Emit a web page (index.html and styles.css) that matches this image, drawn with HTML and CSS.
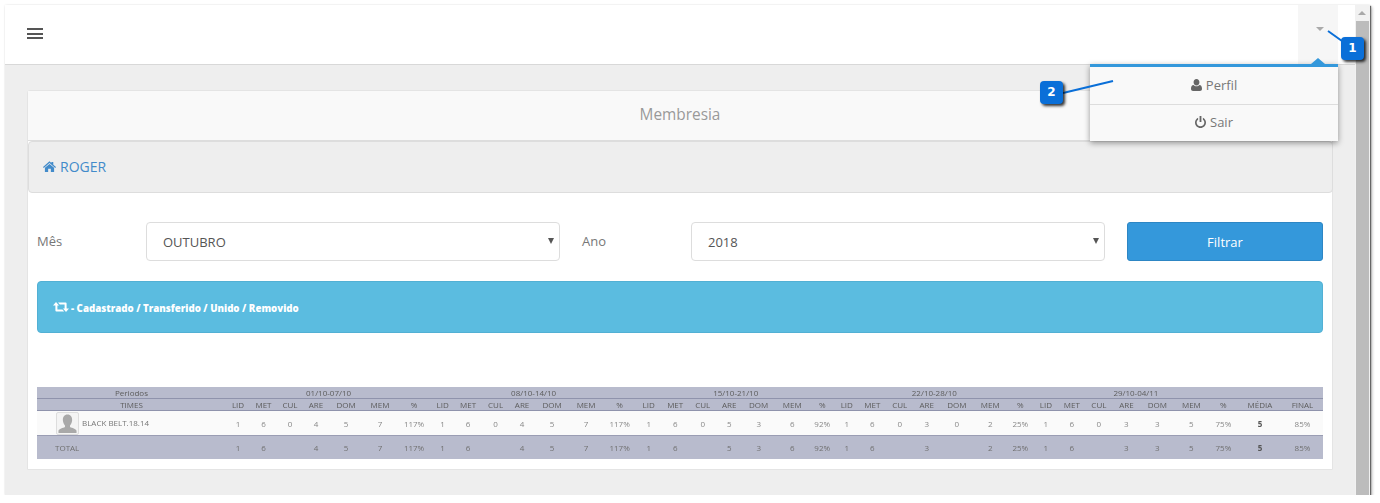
FILE: index.html
```html
<!DOCTYPE html>
<html lang="pt">
<head>
    <meta charset="UTF-8">
    <meta name="viewport" content="width=device-width, initial-scale=1.0">
    <title>Membresia</title>
    <link rel="stylesheet" href="styles.css">
</head>
<body>
<div class="window">
    <div class="main">
        <header class="topbar">
            <div class="menu-icon"><span></span><span></span><span></span></div>
            <div class="user-toggle"><span class="caret"></span></div>
        </header>

        <div class="content">
            <div class="card">
                <div class="card-title">Membresia</div>
                <div class="breadcrumb">
                    <svg class="icon-home" viewBox="0 0 24 20"><path d="M12 0.5 L15.5 3.6 V1.5 H19 V6.7 L24 11 L22.6 12.6 L12 3.4 L1.4 12.6 L0 11 Z M12 5.2 L20.5 12.5 V20 H14.5 V14 H9.5 V20 H3.5 V12.5 Z"/></svg>
                    <a class="crumb-link">ROGER</a>
                </div>
                <div class="card-body">
                    <form class="filter-row">
                        <label class="filter-label">Mês</label>
                        <div class="select-wrap month">
                            <select><option>OUTUBRO</option></select>
                        </div>
                        <label class="filter-label year-label">Ano</label>
                        <div class="select-wrap year">
                            <select><option>2018</option></select>
                        </div>
                        <button type="button" class="btn-filter">Filtrar</button>
                    </form>

                    <div class="alert">
                        <svg class="icon-retweet" viewBox="0 0 16 10"><path d="M3 0 L6 3.4 H4.4 V7.6 H9.4 L11.2 9.6 H3.4 Q2.4 9.6 2.4 8.6 V3.4 H0 Z M5 0.4 H12.6 Q13.6 0.4 13.6 1.4 V6.6 H16 L13 10 L10 6.6 H11.6 V2.4 H6.8 Z"/></svg>
                        <span>- Cadastrado / Transferido / Unido / Removido</span>
                    </div>

                    <table class="report">
                        <colgroup>
                            <col width="189">
                            <col width="24"><col width="27"><col width="26"><col width="26"><col width="34"><col width="34"><col width="34">
                            <col width="23"><col width="28"><col width="27"><col width="26"><col width="34"><col width="34"><col width="33">
                            <col width="25"><col width="28"><col width="27"><col width="26"><col width="33"><col width="34"><col width="26">
                            <col width="23"><col width="28"><col width="27"><col width="27"><col width="33"><col width="34"><col width="26">
                            <col width="25"><col width="27"><col width="27"><col width="28"><col width="34"><col width="34"><col width="30">
                            <col width="43"><col width="42">
                        </colgroup>
                        <thead>
                            <tr class="period-row">
                                <th>Periodos</th>
                                <th colspan="7">01/10-07/10</th>
                                <th colspan="7">08/10-14/10</th>
                                <th colspan="7">15/10-21/10</th>
                                <th colspan="7">22/10-28/10</th>
                                <th colspan="7">29/10-04/11</th>
                                <th colspan="2"></th>
                            </tr>
                            <tr class="column-row">
                                <th>TIMES</th>
                                <th>LID</th><th>MET</th><th>CUL</th><th>ARE</th><th>DOM</th><th>MEM</th><th>%</th>
                                <th>LID</th><th>MET</th><th>CUL</th><th>ARE</th><th>DOM</th><th>MEM</th><th>%</th>
                                <th>LID</th><th>MET</th><th>CUL</th><th>ARE</th><th>DOM</th><th>MEM</th><th>%</th>
                                <th>LID</th><th>MET</th><th>CUL</th><th>ARE</th><th>DOM</th><th>MEM</th><th>%</th>
                                <th>LID</th><th>MET</th><th>CUL</th><th>ARE</th><th>DOM</th><th>MEM</th><th>%</th>
                                <th>MÉDIA</th><th>FINAL</th>
                            </tr>
                        </thead>
                        <tbody>
                            <tr class="team-row">
                                <td class="team-cell">
                                    <div class="team">
                                        <div class="avatar">
                                            <svg viewBox="0 0 20 20"><path d="M10 1.5 C13 1.5 14.6 3.8 14.4 7 C14.3 9.2 13.4 10.8 12.4 11.8 V13.4 C14.4 14.4 18 15 18.6 17 V19 H1.4 V17 C2 15 5.6 14.4 7.6 13.4 V11.8 C6.6 10.8 5.7 9.2 5.6 7 C5.4 3.8 7 1.5 10 1.5 Z"/></svg>
                                        </div>
                                        <span class="team-name">BLACK BELT.18.14</span>
                                    </div>
                                </td>
                                <td>1</td><td>6</td><td>0</td><td>4</td><td>5</td><td>7</td><td>117%</td>
                                <td>1</td><td>6</td><td>0</td><td>4</td><td>5</td><td>7</td><td>117%</td>
                                <td>1</td><td>6</td><td>0</td><td>5</td><td>3</td><td>6</td><td>92%</td>
                                <td>1</td><td>6</td><td>0</td><td>3</td><td>0</td><td>2</td><td>25%</td>
                                <td>1</td><td>6</td><td>0</td><td>3</td><td>3</td><td>5</td><td>75%</td>
                                <td><b>5</b></td><td>85%</td>
                            </tr>
                            <tr class="total-row">
                                <td class="total-label">TOTAL</td>
                                <td>1</td><td>6</td><td></td><td>4</td><td>5</td><td>7</td><td>117%</td>
                                <td>1</td><td>6</td><td></td><td>4</td><td>5</td><td>7</td><td>117%</td>
                                <td>1</td><td>6</td><td></td><td>5</td><td>3</td><td>6</td><td>92%</td>
                                <td>1</td><td>6</td><td></td><td>3</td><td></td><td>2</td><td>25%</td>
                                <td>1</td><td>6</td><td></td><td>3</td><td>3</td><td>5</td><td>75%</td>
                                <td><b>5</b></td><td>85%</td>
                            </tr>
                        </tbody>
                    </table>
                </div>
            </div>
        </div>
    </div>

    <div class="scrollbar">
        <div class="scroll-arrow"></div>
        <div class="scroll-thumb"></div>
    </div>

    <div class="user-menu">
        <span class="menu-arrow"></span>
        <a class="menu-item">
            <svg class="menu-icon-svg" viewBox="0 0 12 13"><path d="M6 0 C8 0 9.2 1.5 9.2 3.5 C9.2 5.5 8 7 6 7 C4 7 2.8 5.5 2.8 3.5 C2.8 1.5 4 0 6 0 Z M2.8 6.4 C3.6 7.3 4.7 7.9 6 7.9 C7.3 7.9 8.4 7.3 9.2 6.4 C11 6.6 12 8 12 10.6 C12 12.2 11 13 9.8 13 H2.2 C1 13 0 12.2 0 10.6 C0 8 1 6.6 2.8 6.4 Z"/></svg>
            Perfil
        </a>
        <a class="menu-item">
            <svg class="menu-icon-svg" viewBox="0 0 12 13"><path d="M5 0 H7 V6.5 H5 Z M3.4 1.8 V4 C2.3 4.8 1.8 5.8 1.8 7 C1.8 9.3 3.7 11.1 6 11.1 C8.3 11.1 10.2 9.3 10.2 7 C10.2 5.8 9.7 4.8 8.6 4 V1.8 C10.6 2.7 12 4.7 12 7 C12 10.3 9.3 13 6 13 C2.7 13 0 10.3 0 7 C0 4.7 1.4 2.7 3.4 1.8 Z"/></svg>
            Sair
        </a>
    </div>

    <svg class="callout-line line-one" viewBox="0 0 16 12"><path d="M1 1 L15 11"/></svg>
    <div class="callout badge-one">1</div>
    <svg class="callout-line line-two" viewBox="0 0 52 14"><path d="M1 13 L51 1"/></svg>
    <div class="callout badge-two">2</div>
</div>
</body>
</html>
```

FILE: styles.css
```css
body {
    margin: 0;
    background: #fff;
    font-family: "Open Sans", Arial, sans-serif;
    color: #777;
}

.window {
    position: relative;
    display: flex;
    width: 1365px;
    height: 490px;
    margin: 5px 0 0 5px;
    overflow: hidden;
    background: #eee;
    box-shadow: 1px 1px 1px #666, 2px 2px 3px rgba(0, 0, 0, 0.3), 0 0 2px rgba(0, 0, 0, 0.1);
}

.main {
    flex: 1;
    display: flex;
    flex-direction: column;
    min-width: 0;
}

.topbar {
    display: flex;
    justify-content: space-between;
    height: 59px;
    background: #fff;
    border-bottom: 1px solid #d8d8d8;
    flex-shrink: 0;
}

.menu-icon {
    display: flex;
    flex-direction: column;
    gap: 2.5px;
    margin: 23px 0 0 22px;
}

.menu-icon span {
    display: block;
    width: 16px;
    height: 2px;
    background: #555;
}

.user-toggle {
    width: 40px;
    margin-right: 17px;
    background: #f6f6f6;
    position: relative;
}

.caret {
    display: block;
    width: 0;
    height: 0;
    margin: 22px 0 0 18px;
    border-left: 4px solid transparent;
    border-right: 4px solid transparent;
    border-top: 4px solid #aaa;
}

.content {
    flex: 1;
    padding: 25px 22px 0 22px;
}

.card {
    height: 380px;
    background: #fff;
    border: 1px solid #e4e4e4;
    border-radius: 3px 3px 0 0;
    box-sizing: border-box;
}

.card-title {
    height: 49px;
    line-height: 47px;
    text-align: center;
    font-size: 15.4px;
    color: #999;
    background: #f9f9f9;
    border-bottom: 1px solid #ddd;
}

.breadcrumb {
    display: flex;
    align-items: center;
    gap: 4px;
    height: 52px;
    box-sizing: border-box;
    padding: 0 0 2px 14px;
    background: #eee;
    border: 1px solid #ddd;
    border-radius: 4px;
    margin-right: -1px;
    margin-left: 0;
}

.icon-home {
    width: 13px;
    height: 11px;
    fill: #428bca;
}

.crumb-link {
    font-size: 14px;
    color: #428bca;
}

.card-body {
    padding: 29px 9px 0 9px;
}

.filter-row {
    display: flex;
    align-items: center;
    height: 39px;
}

.filter-label {
    width: 109px;
    flex-shrink: 0;
    font-size: 13px;
    color: #777;
    margin-top: -2px;
}

.year-label {
    margin-left: 22px;
}

.select-wrap {
    position: relative;
    flex-shrink: 0;
    width: 414px;
    height: 39px;
}

.select-wrap::after {
    content: "";
    position: absolute;
    right: 6px;
    top: 16px;
    border-left: 3px solid transparent;
    border-right: 3px solid transparent;
    border-top: 6px solid #555;
}

.select-wrap select {
    appearance: none;
    width: 100%;
    height: 100%;
    padding: 0 16px;
    background: #fff;
    border: 1px solid #ddd;
    border-radius: 4px;
    font-family: "Open Sans", Arial, sans-serif;
    font-size: 13px;
    color: #555;
}

.btn-filter {
    flex-shrink: 0;
    width: 196px;
    height: 39px;
    margin-left: 22px;
    background: #3498db;
    border: 1px solid #2d86c4;
    border-radius: 3px;
    color: #fff;
    font-family: "Open Sans", Arial, sans-serif;
    font-size: 13px;
}

.alert {
    display: flex;
    align-items: center;
    gap: 2px;
    height: 52px;
    box-sizing: border-box;
    margin-top: 20px;
    padding: 3px 0 0 15px;
    background: #5bbce0;
    border: 1px solid #52b0d4;
    border-radius: 4px;
    color: #fff;
    font-size: 9.7px;
    font-weight: 800;
}

.icon-retweet {
    width: 16px;
    height: 10px;
    fill: #fff;
    margin-top: -3px;
}

.report {
    width: 1286px;
    margin-top: 54px;
    border-collapse: collapse;
    table-layout: fixed;
    font-size: 8px;
    text-align: center;
    will-change: opacity;
}

.report th {
    padding: 0;
    font-weight: 400;
    color: #5c5c5c;
    background: #b8bbcd;
}

.period-row th {
    height: 11px;
    line-height: 11px;
    border-bottom: 1px solid #8f93ac;
}

.column-row th {
    height: 11px;
    line-height: 11px;
    border-bottom: 1px solid #8f93ac;
}

.report td {
    padding: 0;
    color: #888;
}

.report td b {
    color: #555;
}

.team-row td {
    height: 24px;
    background: #fafafa;
    border-bottom: 1px solid #9a9db3;
}

.team-cell {
    text-align: left;
}

.team {
    display: flex;
    align-items: center;
    gap: 3px;
    padding-left: 19px;
}

.avatar {
    width: 21px;
    height: 21px;
    background: #f4f4f4;
    border: 1px solid #ddd;
    border-radius: 2px;
    flex-shrink: 0;
}

.avatar svg {
    display: block;
    width: 21px;
    height: 21px;
    fill: #a9a9a9;
}

.team-name {
    color: #777;
    margin-top: -2px;
}

.total-row td {
    height: 23px;
    background: #b8bbcd;
    color: #707070;
}

.report .total-label {
    text-align: left;
    padding-left: 18px;
}

.scrollbar {
    width: 15px;
    flex-shrink: 0;
    background: #f1f1f1;
    box-sizing: border-box;
}

.scroll-arrow {
    width: 0;
    height: 0;
    margin: 6px 0 0 3px;
    border-left: 4px solid transparent;
    border-right: 4px solid transparent;
    border-bottom: 4px solid #a8a8a8;
}

.scroll-thumb {
    height: 474px;
    margin: 6px 1px 0 1px;
    background: #bcbcbc;
}

.user-menu {
    position: absolute;
    left: 1085px;
    top: 59px;
    width: 248px;
    background: #f9f9f9;
    border-top: 3px solid #3498db;
    box-shadow: 0 2px 6px rgba(0, 0, 0, 0.4);
}

.menu-arrow {
    position: absolute;
    right: 13px;
    top: -9px;
    border-left: 7px solid transparent;
    border-right: 7px solid transparent;
    border-bottom: 6px solid #3498db;
}

.menu-item {
    display: flex;
    align-items: center;
    justify-content: center;
    gap: 4px;
    height: 35px;
    padding-bottom: 2px;
    font-size: 13px;
    color: #777;
}

.menu-item + .menu-item {
    border-top: 1px solid #ddd;
    height: 34px;
}

.menu-icon-svg {
    width: 11px;
    height: 12px;
    fill: #666;
}

.callout {
    position: absolute;
    width: 23px;
    height: 23px;
    line-height: 23px;
    text-align: center;
    background: #0a6fd8;
    border-radius: 4px;
    box-shadow: 2px 2px 3px rgba(0, 0, 0, 0.8);
    color: #fff;
    font-family: "DejaVu Sans", Arial, sans-serif;
    font-size: 12px;
    font-weight: 700;
}

.badge-one {
    left: 1336px;
    top: 32px;
}

.badge-two {
    left: 1035px;
    top: 76px;
}

.callout-line {
    position: absolute;
    fill: none;
    stroke: #0a6fd8;
    stroke-width: 2;
}

.line-one {
    left: 1322px;
    top: 25px;
    width: 16px;
    height: 12px;
}

.line-two {
    left: 1057px;
    top: 75px;
    width: 52px;
    height: 14px;
}
```
